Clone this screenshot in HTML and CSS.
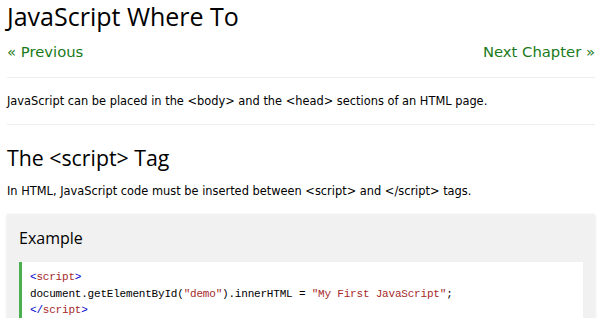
FILE: index.html
```html
<!DOCTYPE html>
<html lang="en">
<head>
    <meta charset="UTF-8">
    <meta name="viewport" content="width=device-width, initial-scale=1.0">
    <title>JavaScript Where To</title>
    <link rel="stylesheet" href="styles.css">
</head>
<body>
    <div class="main">
        <h1>JavaScript Where To</h1>

        <div class="nav">
            <a class="nav-link" href="#">&laquo; Previous</a>
            <a class="nav-link" href="#">Next Chapter &raquo;</a>
        </div>

        <hr class="first">

        <p>JavaScript can be placed in the &lt;body&gt; and the &lt;head&gt; sections of an HTML page.</p>

        <hr>

        <h2>The &lt;script&gt; Tag</h2>
        <p>In HTML, JavaScript code must be inserted between &lt;script&gt; and &lt;/script&gt; tags.</p>

        <div class="example">
            <h3>Example</h3>
            <div class="code">
                <div><span class="tag">&lt;</span><span class="tagname">script</span><span class="tag">&gt;</span></div>
                <div>document.getElementById(<span class="str">"demo"</span>).innerHTML = <span class="str">"My First JavaScript"</span>;</div>
                <div><span class="tag">&lt;/</span><span class="tagname">script</span><span class="tag">&gt;</span></div>
            </div>
        </div>
    </div>
</body>
</html>
```

FILE: styles.css
```css
body {
    margin: 0;
    background: #fff;
    color: #000;
    font-family: "DejaVu Sans", Verdana, sans-serif;
    font-size: 11.4px;
}
.main {
    width: 588px;
    padding: 0 5px 0 7px;
}
h1, h2, h3 {
    font-family: "Open Sans", "Segoe UI", sans-serif;
    font-weight: normal;
    margin: 0;
}
h1 {
    font-size: 25px;
    line-height: 32px;
}
h2 {
    font-size: 21.3px;
    line-height: 28px;
    margin: 19px 0 8px;
}
h3 {
    font-size: 16px;
    line-height: 24px;
    padding: 12px 0;
}
.nav {
    display: flex;
    justify-content: space-between;
    margin-top: 8px;
}
.nav-link {
    color: #1a7a1a;
    text-decoration: none;
    font-size: 14.8px;
    line-height: 24px;
}
hr {
    border: none;
    border-top: 1px solid #eee;
    margin: 12px 0;
}
hr.first {
    margin-top: 13px;
}
p {
    margin: 0;
    line-height: 22px;
}
.example {
    margin-top: 12px;
    background: #f1f1f1;
    padding: 0 12px 12px;
    box-shadow: 0 1px 3px rgba(0,0,0,0.12);
}
.code {
    background: #fff;
    border-left: 3px solid #4caf50;
    padding: 7px 8px 8px;
    font-family: "Liberation Mono", Consolas, monospace;
    font-size: 11px;
    letter-spacing: -0.2px;
    line-height: 16.5px;
}
.tag {
    color: #0000cd;
}
.tagname, .str {
    color: #a52a2a;
}
```
